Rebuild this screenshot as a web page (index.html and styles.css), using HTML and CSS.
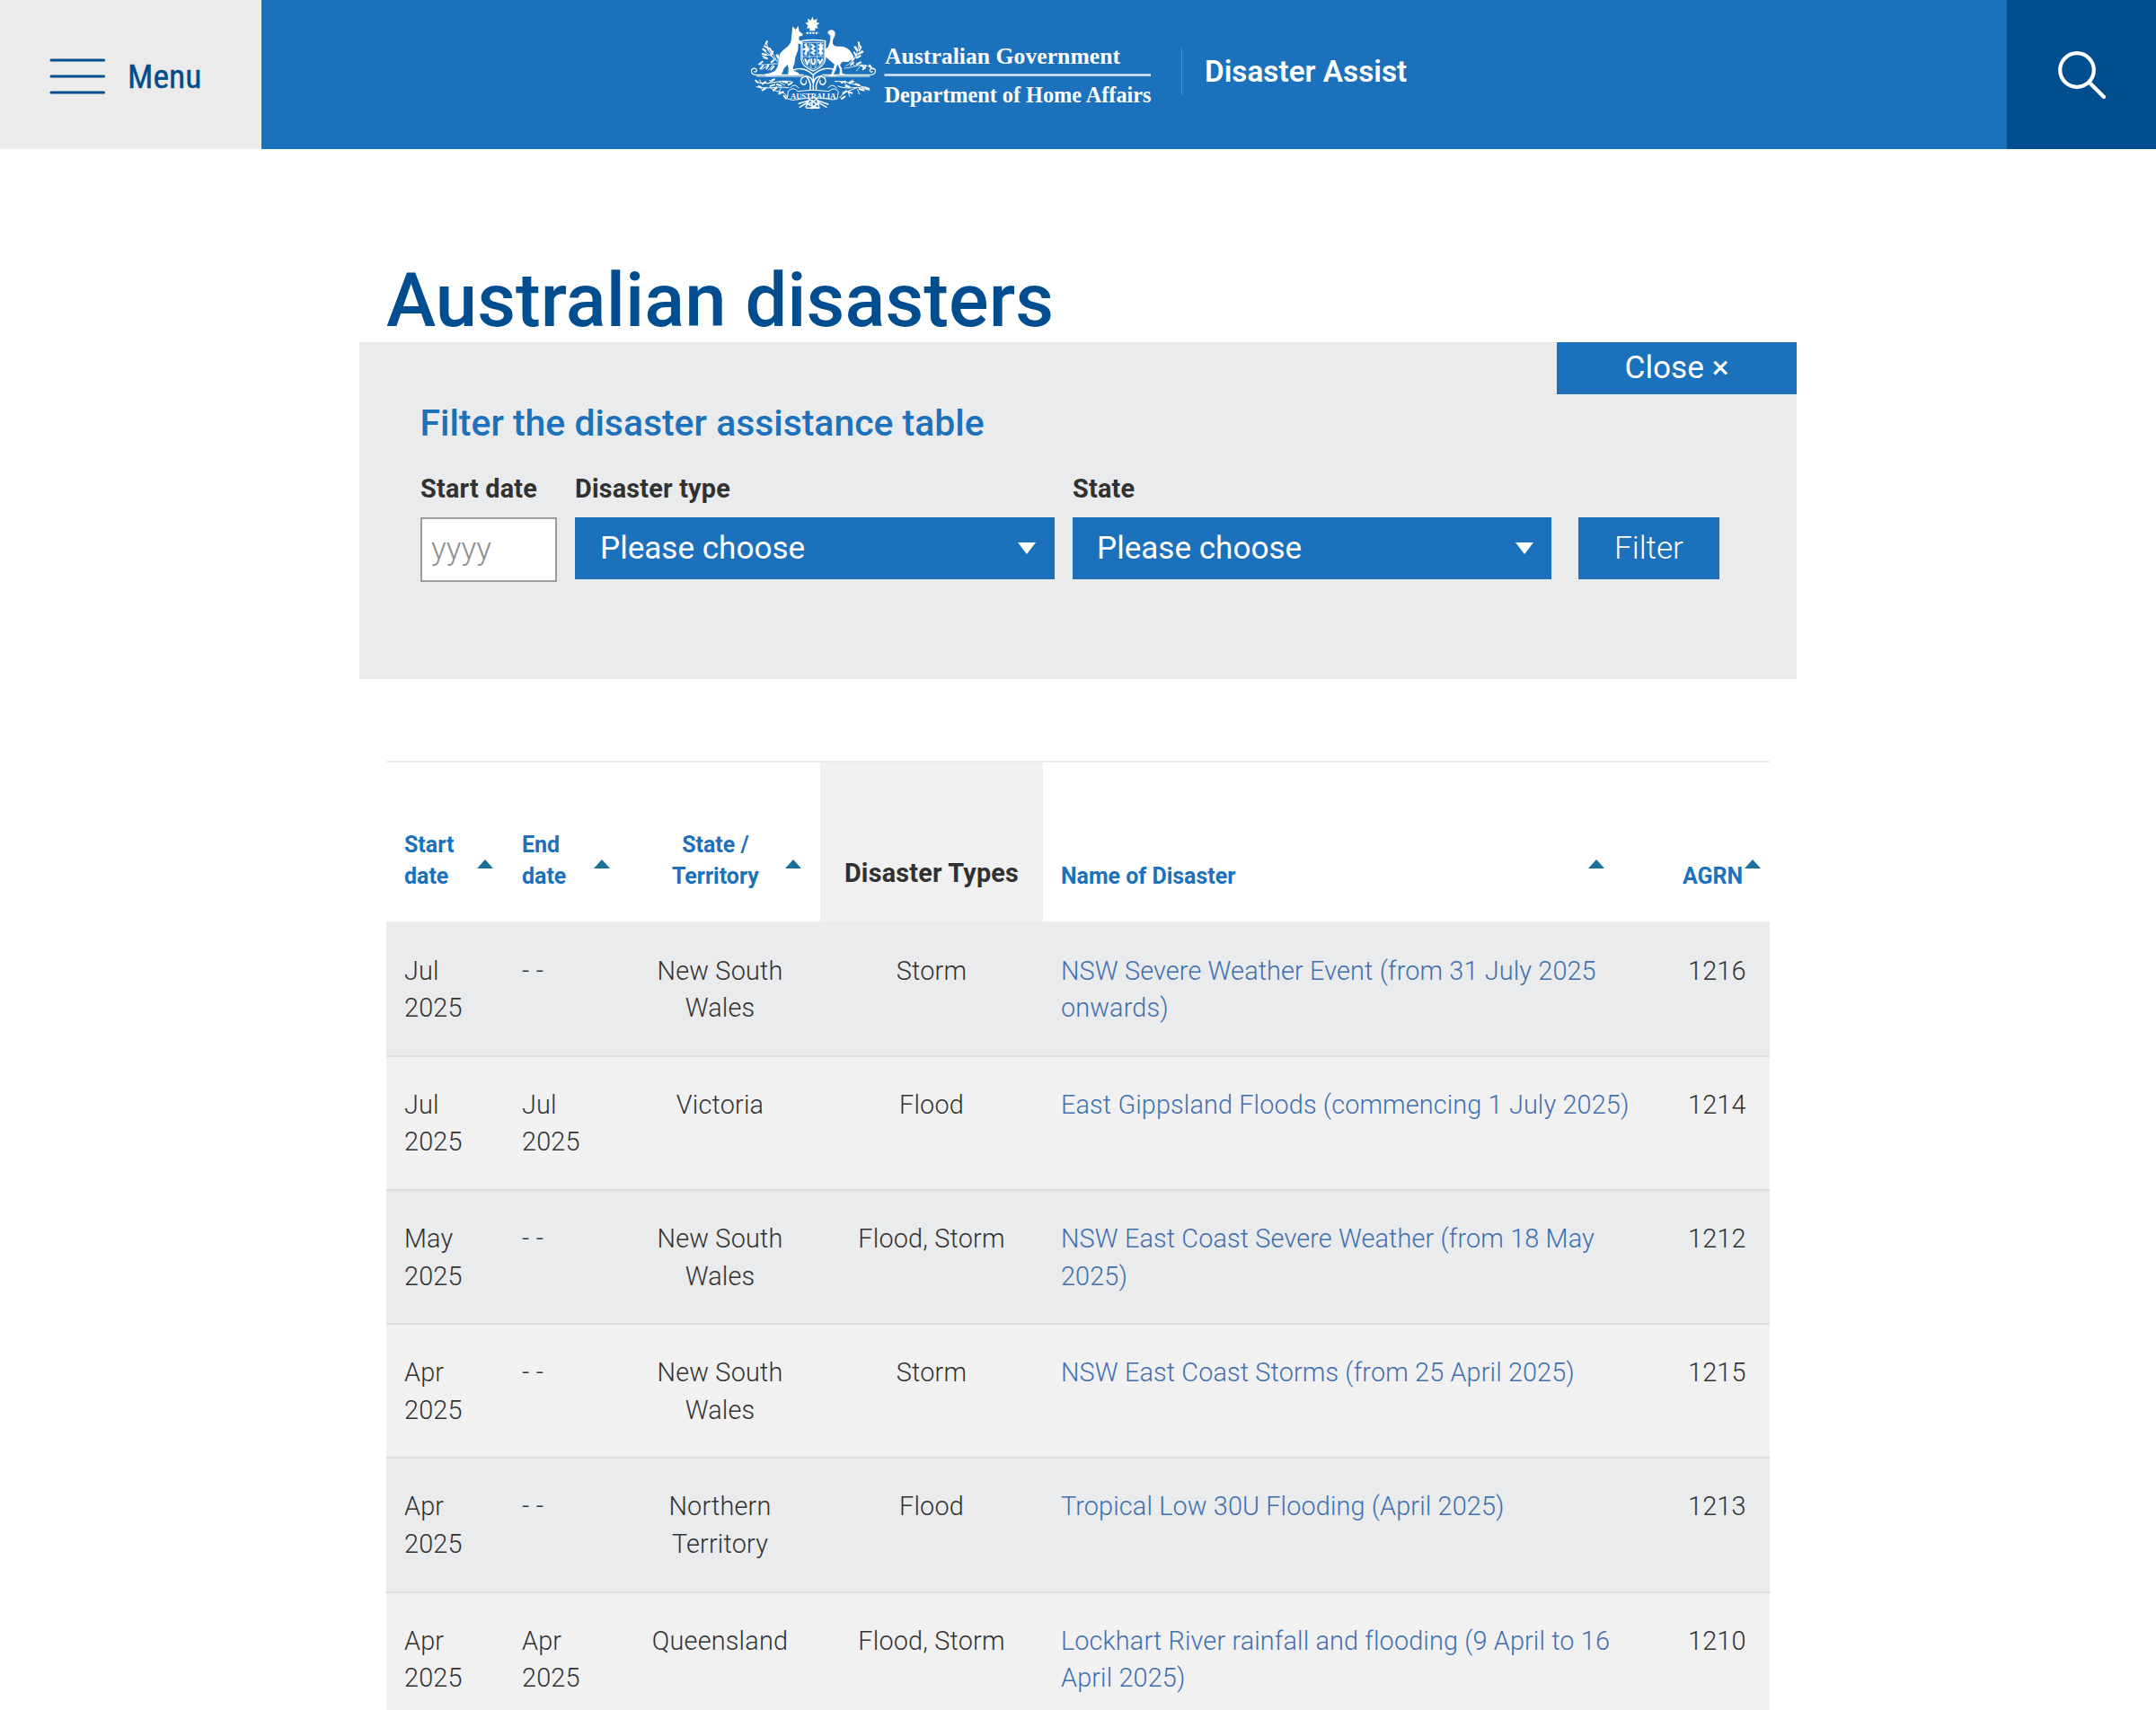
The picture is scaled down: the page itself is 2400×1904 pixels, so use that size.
FILE: index.html
```html
<!DOCTYPE html>
<html lang="en">
<head>
<meta charset="utf-8">
<title>Australian disasters</title>
<link rel="stylesheet" href="styles.css">
</head>
<body>
<header class="header">
  <a class="menu">
    <svg class="menu-icon" width="64" height="42" viewBox="0 0 64 42"><path d="M2 3H60.500M2 21H60.500M2 39H60.500" stroke="#004e8f" stroke-width="3.200" stroke-linecap="round"/></svg>
    <span class="menu-label">Menu</span>
  </a>
  <div class="brand">
    <svg class="arms" width="150" height="120" viewBox="0 0 450 360" fill="none" stroke="#fff" stroke-linecap="round" stroke-linejoin="round">
      <path d="M223 26l5 12 11-6-2 12 10 3-9 8 4 10-10-1v9h-18v-9l-10 1 4-10-9-8 10-3-2-12 11 6z" fill="#fff" stroke="none"/>
      <path d="M203 80H244" stroke-width="6" stroke-dasharray="7 3" stroke-linecap="butt"/>
      <path d="M157 58l10 11 8-13 4 18 12 10-2 5-11 3 1 12 8 5 3 7-8 2-6-3-1 22-9 24-3 22-5 12 2 11 18 8v6h-36l1-22-3-12-12 13-7 18-10 5-38 2c-8 0-10-6-3-8 18-2 28-7 34-18 12-22 3-36 12-50 8-12 20-17 29-28 10-12 7-24 9-34z" fill="#fff" stroke="none"/>
      <path d="M274 80c2-14 23-14 25 0 1 12-10 20-8 34 1 11 14 12 26 11 25 1 41 18 46 46l-10-3-10 9-20-1-8 11 6 12 2 18h8v5h-18l2-21-8-16-13 34h7v5h-24l9-6 11-33-10-8c-10-9-15-13-21-18l-2-21 11-11c7-16 9-26 8-38z" fill="#fff" stroke="none"/>
      <path d="M186 107Q224 100 266 107V168Q263 192 226 207Q188 193 186 168Z" stroke-width="4"/>
      <path d="M191 112H262V166Q260 187 226 201Q193 188 191 166ZM191 159H262M213 112V159M239 112V159M213 159Q211 180 220 196M239 159Q241 180 232 196" stroke-width="2"/>
      <path d="M202 117V152M194 134H210M198 120L207 128M198 149L207 139M220 119l10 7-10 6 11 7-11 7 10 5M245 120l12 12-12 16M257 121l-12 12 12 16M251 116V154M199 168l7 16 5-13M220 168q-2 13 6 17q9-5 5-17M243 170l5 12 8-14" stroke-width="6"/>
      <path d="M34 220C15 219 15 195 32 199C42 203 34 214 29 209M34 220H194M257 220H418C438 219 438 195 421 199C409 203 416 214 423 209M38 225H190M263 225H414" stroke-width="3.500"/>
      <path d="M226 220C204 200 180 195 160 204M226 220C249 200 270 193 300 203M226 250C220 213 181 223 184 243C189 260 207 251 202 240M226 250C233 213 271 223 267 243C262 260 244 251 249 240M226 220V270M215 270Q222 248 201 223M236 270Q231 248 253 223" stroke-width="4.500"/>
      <path d="M123 185C100 175 78 158 70 111M123 185C95 178 70 190 42 185M97 166L58 137M102 170L82 132M88 153L55 157M108 174L110 152M77 141L69 126M72 190L54 202M95 183L75 205M335 190C360 178 375 153 379 111M330 198C364 194 380 184 403 188M356 174L379 150M368 155L389 139M372 141L362 126M365 190L350 178M387 187L370 207M405 189L427 202" stroke-width="2.500"/>
      <path d="M72 108l-5 9M63 124l13 7M58 134l9 6M56 150l13 3M81 132l5 10M91 142l-5 10M61 162l11 3M104 154l4 9M47 183l9-7M58 190l-8 9M76 188l-6 11M86 178l8-7M94 192l-9 10M377 112l4 12M366 127l6 11M385 127l-6 12M391 143l-12 7M363 145l5 10M383 157l-12 6M357 158l-2 12M351 187l9-9M371 185l13-7M386 188l13 9M401 191l-9 11M414 188l6 8" stroke-width="6"/>
      <path d="M36 244C78 258 115 232 158 244M36 260C78 270 96 257 143 263M81 261C102 285 131 269 138 294M413 265C370 257 340 239 298 242M407 270C370 252 347 273 309 258M372 263C347 273 329 276 315 296M52 247L47 237M75 250L91 236M98 246L80 239M112 244L130 254M69 262L55 272M102 260L93 275M119 263L112 276M348 251L356 237M331 248L348 262M389 260L397 273M374 270L380 284M342 276L348 292" stroke-width="3"/>
      <path d="M34 239l7 6M44 258l8 5M56 250l10-6M65 266l-9 5M83 257l13-4M88 238l8-3M93 271l10-8M105 252l13 4M112 283l13-6M124 242l15 4M128 290l7 9M143 253l10-5M320 246l13-4M334 257l13 3M347 245l13-3M367 250l13 5M380 267l13 5M399 262l13 7M346 278l9 3M325 282l11-8M321 300l10-7" stroke-width="6"/>
      <path d="M143 274Q160 258 174 275Q224 266 278 275Q296 258 310 276L306 300Q290 306 279 301Q225 292 174 302Q158 308 140 300ZM149 264Q162 244 177 264M276 263Q290 246 304 264" stroke-width="3"/>
      <text x="150" y="299" textLength="151" lengthAdjust="spacingAndGlyphs" class="scroll-text">AUSTRALIA</text>
      <path d="M211 307L201 327M222 304V333M240 305L246 331M203 331H244M209 311L181 328M240 311L270 328M211 306L178 316M241 306L275 318M212 302L239 318L219 330M238 301L209 319L241 330" stroke-width="4.500"/>
    </svg>
    <div class="department">
      <svg width="300" height="76" viewBox="0 0 300 76" class="department-name">
        <text x="0" y="21.500" font-size="25.600" textLength="262">Australian Government</text>
        <path d="M-.5 34.500H296" stroke="#fff" stroke-opacity=".85" stroke-width="2.400"/>
        <text x="-.5" y="64.500" font-size="24.400" textLength="297" lengthAdjust="spacingAndGlyphs">Department of Home Affairs</text>
      </svg>
    </div>
    <span class="site-name">Disaster Assist</span>
  </div>
  <a class="search">
    <svg width="58" height="58" viewBox="0 0 58 58" fill="none" stroke="#fff" stroke-width="4.200" stroke-linecap="round"><circle cx="22" cy="22" r="18.800"/><path d="M35.500 35.500L52 52"/></svg>
  </a>
</header>

<main class="page">
  <h1 class="title">Australian disasters</h1>
  <section class="filter">
    <button class="close">Close ×</button>
    <h2 class="filter-title">Filter the disaster assistance table</h2>
    <form class="fields">
      <label class="field field-date">Start date<input class="year" type="text" placeholder="yyyy"></label>
      <label class="field field-type">Disaster type<span class="select">Please choose<i class="caret"></i></span></label>
      <label class="field field-state">State<span class="select">Please choose<i class="caret"></i></span></label>
      <button class="submit" type="button">Filter</button>
    </form>
  </section>

  <table class="disasters">
    <colgroup><col class="c-start"><col class="c-end"><col class="c-state"><col class="c-type"><col class="c-name"><col class="c-agrn"></colgroup>
    <thead>
      <tr>
        <th><div class="sort"><span>Start<br>date</span><i class="arrow"></i></div></th>
        <th><div class="sort"><span>End<br>date</span><i class="arrow"></i></div></th>
        <th><div class="sort sort-center"><span>State /<br>Territory</span><i class="arrow"></i></div></th>
        <th class="plain">Disaster Types</th>
        <th><div class="sort sort-name"><span>Name of Disaster</span><i class="arrow"></i></div></th>
        <th><div class="sort sort-agrn"><span>AGRN</span><i class="arrow"></i></div></th>
      </tr>
    </thead>
    <tbody>
      <tr><td>Jul<br>2025</td><td>- -</td><td>New South Wales</td><td>Storm</td><td><a>NSW Severe Weather Event (from 31 July 2025 onwards)</a></td><td>1216</td></tr>
      <tr><td>Jul<br>2025</td><td>Jul<br>2025</td><td>Victoria</td><td>Flood</td><td><a>East Gippsland Floods (commencing 1 July 2025)</a></td><td>1214</td></tr>
      <tr><td>May<br>2025</td><td>- -</td><td>New South Wales</td><td>Flood, Storm</td><td><a>NSW East Coast Severe Weather (from 18 May 2025)</a></td><td>1212</td></tr>
      <tr><td>Apr<br>2025</td><td>- -</td><td>New South Wales</td><td>Storm</td><td><a>NSW East Coast Storms (from 25 April 2025)</a></td><td>1215</td></tr>
      <tr><td>Apr<br>2025</td><td>- -</td><td>Northern Territory</td><td>Flood</td><td><a>Tropical Low 30U Flooding (April 2025)</a></td><td>1213</td></tr>
      <tr><td>Apr<br>2025</td><td>Apr<br>2025</td><td>Queensland</td><td>Flood, Storm</td><td><a>Lockhart River rainfall and flooding (9 April to 16 April 2025)</a></td><td>1210</td></tr>
    </tbody>
  </table>
</main>
</body>
</html>
```
FILE: styles.css
```css
* { box-sizing: border-box; }

html, body { height: 1904px; overflow: hidden; }

body {
  margin: 0;
  background: #fff;
  color: #313131;
  font-family: Roboto, sans-serif;
  font-size: 28.8px;
  font-weight: 300;
}

/* Header */
.header {
  display: flex;
  height: 166px;
  background: #1c71bc;
  color: #fff;
}

.menu {
  display: flex;
  align-items: center;
  width: 291px;
  padding: 4px 0 0 55px;
  background: #ebebeb;
  color: #004e8f;
}

.menu-label {
  margin-left: 23px;
  font: 400 37.6px/44px "Roboto Condensed", Roboto, sans-serif;
  -webkit-text-stroke: .4px #004e8f;
}

.brand {
  display: flex;
  flex: 1;
  align-items: flex-start;
  padding: 10px 0 0 539px;
}

.arms { flex: none; }

.scroll-text {
  font: bold 25px "Liberation Serif", serif;
  fill: #fff;
  stroke: none;
}

.department {
  height: 53px;
  margin: 43px 0 0 5px;
  padding-right: 30px;
  border-right: 1px solid #4a8dc9;
}

.department-name {
  display: block;
  margin-top: -4px;
  overflow: visible;
  font-family: "Liberation Serif", serif;
  font-weight: bold;
  fill: #fff;
}

.site-name {
  margin: 50px 0 0 25px;
  font-size: 33.3px;
  font-weight: 600;
  line-height: 40px;
  white-space: nowrap;
}

.search {
  width: 166px;
  padding: 56px 0 0 56px;
  background: #004e8f;
}

.search svg { display: block; }

/* Title and filter */
.page { width: 1600px; margin: 0 auto; }

.title {
  margin: 0;
  padding: 122px 0 0 30px;
  color: #004e8f;
  font-size: 83.2px;
  font-weight: 500;
  line-height: 93px;
  letter-spacing: .08px;
}

.filter {
  display: flow-root;
  height: 375px;
  background: #e9ebec;
}

.close, .submit {
  border: 0;
  background: #1c71bc;
  color: #fff;
  font: 400 35.2px/41px Roboto, sans-serif;
}

.close {
  display: block;
  width: 267px;
  height: 58px;
  margin-left: auto;
  padding: 0 0 1px;
}

.filter-title {
  margin: 7px 0 0 67.5px;
  color: #1c71bc;
  font-size: 40.9px;
  font-weight: 500;
  line-height: 50px;
}

.fields {
  display: flex;
  align-items: flex-start;
  margin: 29px 0 0 68px;
}

.field {
  font-weight: 700;
  letter-spacing: .2px;
  line-height: 38px;
}

.field-date { width: 152px; margin-right: 20px; }
.field-type { width: 534px; margin-right: 20px; }
.field-state { width: 533px; margin-right: 30px; }

.year {
  display: block;
  width: 152px;
  height: 72px;
  margin-top: 13px;
  padding: 0 10px 2px;
  border: 2px solid #9c9c9c;
  background: #fff;
  font: 300 35.2px/40px Roboto, sans-serif;
}

.year::placeholder { color: #8f8f8f; opacity: 1; }

.select {
  display: flex;
  align-items: center;
  justify-content: space-between;
  height: 69px;
  margin-top: 13px;
  padding: 0 20px 2px 28px;
  background: #1c71bc;
  color: #fff;
  font-size: 35.1px;
  font-weight: 400;
  letter-spacing: 0;
}

.field-state .select { padding-left: 27px; }
.field-type .select { padding-right: 21px; }

.caret {
  margin-top: 1px;
  border: solid transparent;
  border-width: 13px 10px 0;
  border-top-color: #fff;
}

.submit {
  width: 157px;
  height: 69px;
  margin-top: 51px;
  padding: 0;
  font-weight: 300;
}

/* Disasters table */
.disasters {
  width: 1540px;
  margin: 91px 30px 0;
  border-spacing: 0;
  border-top: 2px solid #ebebeb;
  table-layout: fixed;
  letter-spacing: .2px;
  line-height: 41.6px;
}

.c-start { width: 131px; }
.c-end { width: 129px; }
.c-state { width: 223px; }
.c-type { width: 248px; }
.c-name { width: 692px; }
.c-agrn { width: 117px; }

.disasters th {
  height: 177px;
  padding: 0 20px;
  text-align: left;
  vertical-align: bottom;
}

.disasters .plain {
  padding: 0 0 32px;
  background: #f1f1f1;
  text-align: center;
}

.sort {
  display: flex;
  align-items: flex-end;
  justify-content: space-between;
  padding-bottom: 33px;
  color: #1c71bc;
  font-size: 24.96px;
  line-height: 35px;
  letter-spacing: 0;
}

.disasters th:nth-child(1) .sort { margin-right: -8px; }
.disasters th:nth-child(2) .sort { margin-right: -9px; }

.sort-center { margin-right: 1px; text-align: center; }
.sort-center span { margin-left: 38px; }
.sort-name { margin-right: 47px; }
.sort-agrn { margin-right: -10px; }

.arrow {
  margin-bottom: 26px;
  border: solid transparent;
  border-width: 0 9px 10px;
  border-bottom-color: #19719c;
}

.disasters td {
  padding: 33px 20px 31px;
  border-bottom: 2px solid #dcdddf;
  background: #e9ebec;
  vertical-align: top;
}

.disasters tbody tr:first-child td { padding-top: 34.6px; }
.disasters tbody tr:nth-child(even) td { background: #f1f1f1; }
.disasters td:nth-child(3) { padding-left: 30px; padding-right: 30px; }
.disasters td:nth-child(3), .disasters td:nth-child(4) { text-align: center; }
.disasters td:nth-child(6) { padding-left: 26px; }
.disasters a { color: #3f6fb0; letter-spacing: .14px; }
```
